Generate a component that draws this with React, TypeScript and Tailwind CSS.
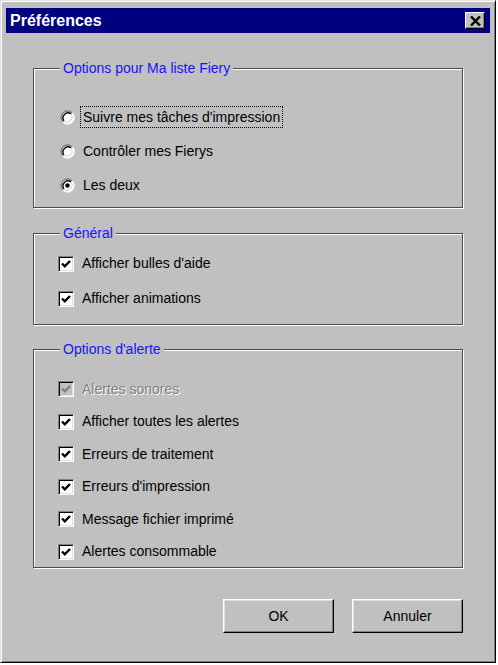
import React from 'react';

const font = { fontFamily: '"Liberation Sans", Arial, sans-serif' };

const Radio = ({ checked }: { checked?: boolean }) => (
  <svg width="15" height="15" viewBox="0 0 15 15" className="shrink-0">
    <circle cx="7.5" cy="7.5" r="6.5" fill="#fff" />
    <path d="M2.9 12.1 A6.5 6.5 0 0 1 12.1 2.9" fill="none" stroke="#808080" strokeWidth="1.4" />
    <path d="M12.1 2.9 A6.5 6.5 0 0 1 2.9 12.1" fill="none" stroke="#fff" strokeWidth="1.4" />
    <path d="M4.0 11.0 A5 5 0 0 1 11.0 4.0" fill="none" stroke="#000" strokeWidth="1.4" />
    <path d="M11.0 4.0 A5 5 0 0 1 4.0 11.0" fill="none" stroke="#dfdfdf" strokeWidth="1.4" />
    {checked && <circle cx="7.5" cy="7.5" r="2.2" fill="#000" />}
  </svg>
);

const Check = ({ disabled }: { disabled?: boolean }) => (
  <div
    className={`w-[16px] h-[16px] shrink-0 flex items-center justify-center border border-t-[#808080] border-l-[#808080] border-b-white border-r-white shadow-[inset_1px_1px_0_#000,inset_-1px_-1px_0_#dfdfdf] ${
      disabled ? 'bg-[#c0c0c0]' : 'bg-white'
    }`}
  >
    <svg width="10" height="10" viewBox="0 0 10 10">
      <path d="M1 4.5 L3.8 7.3 L9 2" fill="none" stroke={disabled ? '#808080' : '#000'} strokeWidth="2.4" />
    </svg>
  </div>
);

const Group = ({ title, height, className, children }: { title: string; height: string; className: string; children: React.ReactNode }) => (
  <div
    className={`ml-[27px] w-[430px] border border-[#4a4a4a] shadow-[1px_1px_0_#fff,inset_1px_1px_0_#fff] ${height} ${className}`}
  >
    <div className="-mt-[9px] ml-[26px] w-fit px-[3px] bg-[#c0c0c0] text-[14px] leading-[17px] text-[#1414ff]">{title}</div>
    {children}
  </div>
);

const Button = ({ label }: { label: string }) => (
  <button className="w-[111px] h-[34px] bg-[#c0c0c0] border border-t-white border-l-white border-b-black border-r-black shadow-[inset_-1px_-1px_0_#808080,inset_1px_1px_0_#dfdfdf] text-[14px] text-black">
    {label}
  </button>
);

export default function App() {
  const alerts = [
    'Afficher toutes les alertes',
    'Erreurs de traitement',
    "Erreurs d'impression",
    'Message fichier imprimé',
    'Alertes consommable',
  ];

  return (
    <div style={font} className="w-[496px] h-[663px] bg-[#c0c0c0] border border-t-[#dfdfdf] border-l-[#dfdfdf] border-b-black border-r-black shadow-[inset_1px_1px_0_#fff,inset_-1px_-1px_0_#808080] pt-[7px] px-[5px] text-black">
      {/* Title bar */}
      <div className="h-[25px] bg-[#000080] flex items-center justify-between pl-[4px] pr-[5px]">
        <span className="text-white font-bold text-[16px] leading-none">Préférences</span>
        <div className="w-[20px] h-[17px] bg-[#c0c0c0] border border-t-white border-l-white border-b-black border-r-black shadow-[inset_-1px_-1px_0_#808080] flex items-center justify-center">
          <svg width="11" height="10" viewBox="0 0 11 10">
            <path d="M1 0.5 L10 9.5 M10 0.5 L1 9.5" stroke="#000" strokeWidth="2.4" />
          </svg>
        </div>
      </div>

      <Group title="Options pour Ma liste Fiery" height="h-[140px]" className="mt-[35px]">
        <div className="mt-[23px] flex flex-col">
          <div className="h-[34px] flex items-center pl-[26px] gap-[5px]">
            <Radio />
            <span className="text-[14px] border border-dotted border-black px-[2px] py-[2px] leading-[16px]">Suivre mes tâches d'impression</span>
          </div>
          <div className="h-[34px] flex items-center pl-[26px] gap-[8px]">
            <Radio />
            <span className="text-[14px]">Contrôler mes Fierys</span>
          </div>
          <div className="h-[34px] flex items-center pl-[26px] gap-[8px]">
            <Radio checked />
            <span className="text-[14px]">Les deux</span>
          </div>
        </div>
      </Group>

      <Group title="Général" height="h-[92px]" className="mt-[25px]">
        <div className="mt-[4px] flex flex-col">
          <div className="h-[35px] flex items-center pl-[24px] gap-[8px]">
            <Check />
            <span className="text-[14px]">Afficher bulles d'aide</span>
          </div>
          <div className="h-[35px] flex items-center pl-[24px] gap-[8px]">
            <Check />
            <span className="text-[14px]">Afficher animations</span>
          </div>
        </div>
      </Group>

      <Group title="Options d'alerte" height="h-[219px]" className="mt-[24px]">
        <div className="mt-[15px] flex flex-col">
          <div className="h-[32.5px] flex items-center pl-[24px] gap-[8px]">
            <Check disabled />
            <span className="text-[14px] text-[#808080] [text-shadow:1px_1px_0_#fff]">Alertes sonores</span>
          </div>
          {alerts.map((a) => (
            <div key={a} className="h-[32.5px] flex items-center pl-[24px] gap-[8px]">
              <Check />
              <span className="text-[14px]">{a}</span>
            </div>
          ))}
        </div>
      </Group>

      <div className="mt-[31px] flex justify-end gap-[18px] pr-[27px]">
        <Button label="OK" />
        <Button label="Annuler" />
      </div>
    </div>
  );
}
